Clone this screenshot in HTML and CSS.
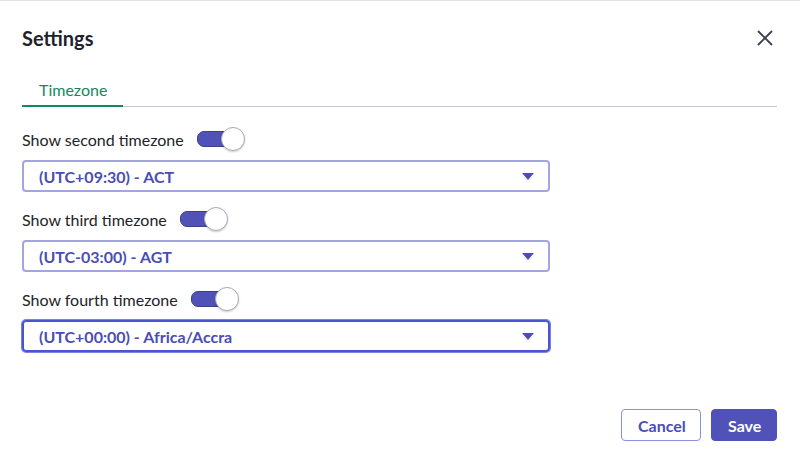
FILE: index.html
```html
<!DOCTYPE html>
<html>
<head>
    <meta name="viewport" content="width=device-width, initial-scale=1.0">
    <title>Settings</title>
    <link rel="stylesheet" href="styles.css">
</head>
<body>
    <div class="dialog">
        <header class="dialog_head">
            <h1>Settings</h1>
            <button class="close_button" aria-label="Close">
                <svg width="16" height="16" viewBox="0 0 16 16"><path d="M1 1 L15 15 M15 1 L1 15" stroke="#3b3f4a" stroke-width="1.8" fill="none"/></svg>
            </button>
        </header>
        <div class="tabs">
            <span class="tab tab_active">Timezone</span>
        </div>
        <div class="fields">
            <div class="field">
                <div class="field_label">
                    <label>Show second timezone</label>
                    <span class="switch"><span class="switch_knob"></span></span>
                </div>
                <div class="select">
                    <span>(UTC+09:30) - ACT</span>
                    <svg class="select_arrow" width="12" height="7" viewBox="0 0 12 7"><path d="M0 0 H12 L6 7 Z" fill="#4a4db4"/></svg>
                </div>
            </div>
            <div class="field">
                <div class="field_label">
                    <label>Show third timezone</label>
                    <span class="switch"><span class="switch_knob"></span></span>
                </div>
                <div class="select">
                    <span>(UTC-03:00) - AGT</span>
                    <svg class="select_arrow" width="12" height="7" viewBox="0 0 12 7"><path d="M0 0 H12 L6 7 Z" fill="#4a4db4"/></svg>
                </div>
            </div>
            <div class="field">
                <div class="field_label">
                    <label>Show fourth timezone</label>
                    <span class="switch"><span class="switch_knob"></span></span>
                </div>
                <div class="select select_focus">
                    <span>(UTC+00:00) - Africa/Accra</span>
                    <svg class="select_arrow" width="12" height="7" viewBox="0 0 12 7"><path d="M0 0 H12 L6 7 Z" fill="#4a4db4"/></svg>
                </div>
            </div>
        </div>
        <footer class="actions">
            <button class="btn btn_outline">Cancel</button>
            <button class="btn btn_primary">Save</button>
        </footer>
    </div>
</body>
</html>
```

FILE: styles.css
```css
* {
    font-family: Lato, "Noto Sans", sans-serif;
    box-sizing: border-box;
}
body {
    margin: 0;
    background: #ffffff;
}
.dialog {
    height: 462px;
    border-top: 1px solid #e2e2ea;
    padding: 0 23px 21px 22px;
    display: flex;
    flex-direction: column;
}
.dialog_head {
    display: flex;
    align-items: center;
    justify-content: space-between;
    padding-top: 25px;
    height: 49px;
}
.dialog_head h1 {
    margin: 0;
    font-size: 20px;
    line-height: 24px;
    font-weight: 700;
    color: #1f222c;
}
.close_button {
    border: 0;
    background: none;
    padding: 0;
    margin-right: 4px;
    width: 16px;
    height: 16px;
    display: flex;
}
.tabs {
    margin-top: 30px;
    border-bottom: 1px solid #c9c7d9;
    display: flex;
}
.tab {
    padding: 0 16px 5px 17px;
    font-size: 16px;
    line-height: 20px;
    color: #128a5e;
    margin-bottom: -1px;
}
.tab_active {
    border-bottom: 2px solid #128a5e;
}
.fields {
    margin-top: 20px;
}
.field {
    margin-bottom: 15px;
}
.field_label {
    display: flex;
    align-items: center;
    height: 24px;
    margin-bottom: 9px;
}
.field_label label {
    font-size: 16px;
    color: #222329;
}
.switch {
    position: relative;
    margin-left: 13px;
    width: 48px;
    height: 24px;
    display: flex;
    align-items: center;
}
.switch::before {
    content: "";
    width: 38px;
    height: 14px;
    border-radius: 7px;
    background: #5052b8;
    border: 1px solid #3e3f8f;
}
.switch_knob {
    position: absolute;
    left: 24px;
    top: 0;
    width: 24px;
    height: 24px;
    border-radius: 50%;
    background: #ffffff;
    border: 1px solid #a9a9bb;
    box-shadow: 0 1px 2px rgba(0, 0, 0, 0.2);
}
.select {
    width: 528px;
    height: 32px;
    border: 2px solid #a3a5e1;
    border-radius: 4px;
    display: flex;
    align-items: center;
    justify-content: space-between;
    padding: 0 14px 0 15px;
    font-size: 16px;
    font-weight: 700;
    color: #4a4db4;
}
.select_focus {
    border-color: #4a53d6;
    box-shadow: 0 0 0 1px #7c82e2;
}
.actions {
    margin-top: auto;
    display: flex;
    justify-content: flex-end;
    gap: 10px;
}
.btn {
    height: 32px;
    border-radius: 4px;
    font-size: 16px;
    font-weight: 700;
    padding: 0 16px;
    cursor: pointer;
}
.btn_outline {
    width: 80px;
    background: #ffffff;
    border: 1px solid #8c8fe0;
    color: #4a4db4;
}
.btn_primary {
    width: 66px;
    background: #5052b8;
    border: 1px solid #5052b8;
    color: #ffffff;
}
```
